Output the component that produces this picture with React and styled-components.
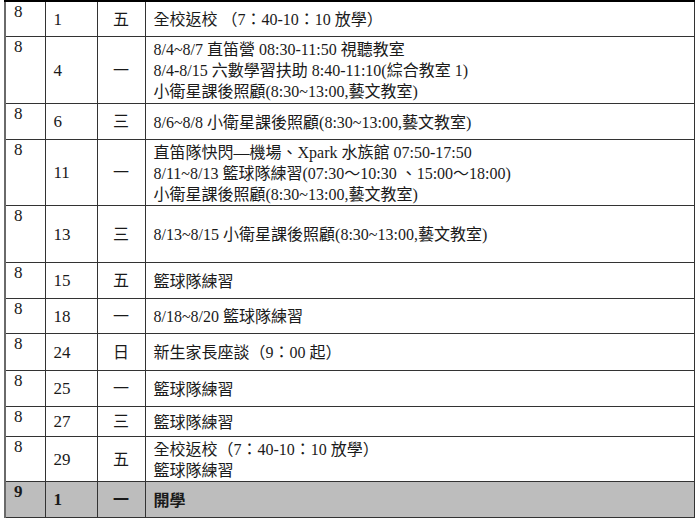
import React from "react";
import styled, { createGlobalStyle } from "styled-components";

const GlobalStyle = createGlobalStyle`
  html, body {
    margin: 0;
    padding: 0;
    background: #ffffff;
  }
  body {
    font-family: "Liberation Serif", "Noto Sans CJK TC", serif;
    color: #1a1a1a;
  }
`;

const rows = [
  { m: "8", d: "1", w: "五", h: 35, lines: ["全校返校 （7：40-10：10 放學）"] },
  {
    m: "8",
    d: "4",
    w: "一",
    h: 67,
    lines: [
      "8/4~8/7 直笛營 08:30-11:50 視聽教室",
      "8/4-8/15 六數學習扶助 8:40-11:10(綜合教室 1)",
      "小衛星課後照顧(8:30~13:00,藝文教室)",
    ],
  },
  { m: "8", d: "6", w: "三", h: 36, lines: ["8/6~8/8 小衛星課後照顧(8:30~13:00,藝文教室)"] },
  {
    m: "8",
    d: "11",
    w: "一",
    h: 64,
    lines: [
      "直笛隊快閃—機場、Xpark 水族館 07:50-17:50",
      "8/11~8/13 籃球隊練習(07:30～10:30 、15:00～18:00)",
      "小衛星課後照顧(8:30~13:00,藝文教室)",
    ],
  },
  { m: "8", d: "13", w: "三", h: 57, lines: ["8/13~8/15 小衛星課後照顧(8:30~13:00,藝文教室)"] },
  { m: "8", d: "15", w: "五", h: 36, lines: ["籃球隊練習"] },
  { m: "8", d: "18", w: "一", h: 35, lines: ["8/18~8/20 籃球隊練習"] },
  { m: "8", d: "24", w: "日", h: 37, lines: ["新生家長座談（9：00 起）"] },
  { m: "8", d: "25", w: "一", h: 36, lines: ["籃球隊練習"] },
  { m: "8", d: "27", w: "三", h: 30, lines: ["籃球隊練習"] },
  { m: "8", d: "29", w: "五", h: 43, lines: ["全校返校（7：40-10：10 放學）", "籃球隊練習"] },
  { m: "9", d: "1", w: "一", h: 36, lines: ["開學"], hi: true },
];

const Page = styled.div`
  padding: 0 5px 0 4px;
`;

const Table = styled.table`
  width: 691px;
  border-collapse: collapse;
  table-layout: fixed;
  border-top: 2px solid #000;
  border-left: 2px solid #6a6a6a;
  border-right: 1px solid #111;
  border-bottom: 1px solid #222;
  font-size: 16px;
  line-height: 20px;
`;

const Row = styled.tr`
  background: ${(p) => (p.$hi ? "#bdbdbd" : "#ffffff")};
  font-weight: ${(p) => (p.$hi ? "bold" : "normal")};
`;

const Cell = styled.td`
  box-sizing: border-box;
  height: ${(p) => p.$h}px;
  border: 1px solid #333;
  padding: ${(p) => (p.$top ? "0 8px" : "2px 8px 0")};
  vertical-align: ${(p) => (p.$top ? "top" : "middle")};
  text-align: ${(p) => (p.$center ? "center" : "left")};
  font-size: ${(p) => (p.$num ? "17px" : "16px")};
  white-space: nowrap;
  overflow: hidden;
`;

const Line = styled.div`
  white-space: nowrap;
  height: 21px;
  line-height: 21px;
`;

export default function App() {
  return (
    <>
      <GlobalStyle />
      <Page>
        <Table>
          <colgroup>
            <col style={{ width: 40 }} />
            <col style={{ width: 52 }} />
            <col style={{ width: 48 }} />
            <col />
          </colgroup>
          <tbody>
            {rows.map((r, i) => (
              <Row key={i} $hi={r.hi}>
                <Cell $h={r.h} $top $num>
                  {r.m}
                </Cell>
                <Cell $h={r.h} $num>
                  {r.d}
                </Cell>
                <Cell $h={r.h} $center>
                  {r.w}
                </Cell>
                <Cell $h={r.h}>
                  {r.lines.map((t, k) => (
                    <Line key={k}>{t}</Line>
                  ))}
                </Cell>
              </Row>
            ))}
          </tbody>
        </Table>
      </Page>
    </>
  );
}
